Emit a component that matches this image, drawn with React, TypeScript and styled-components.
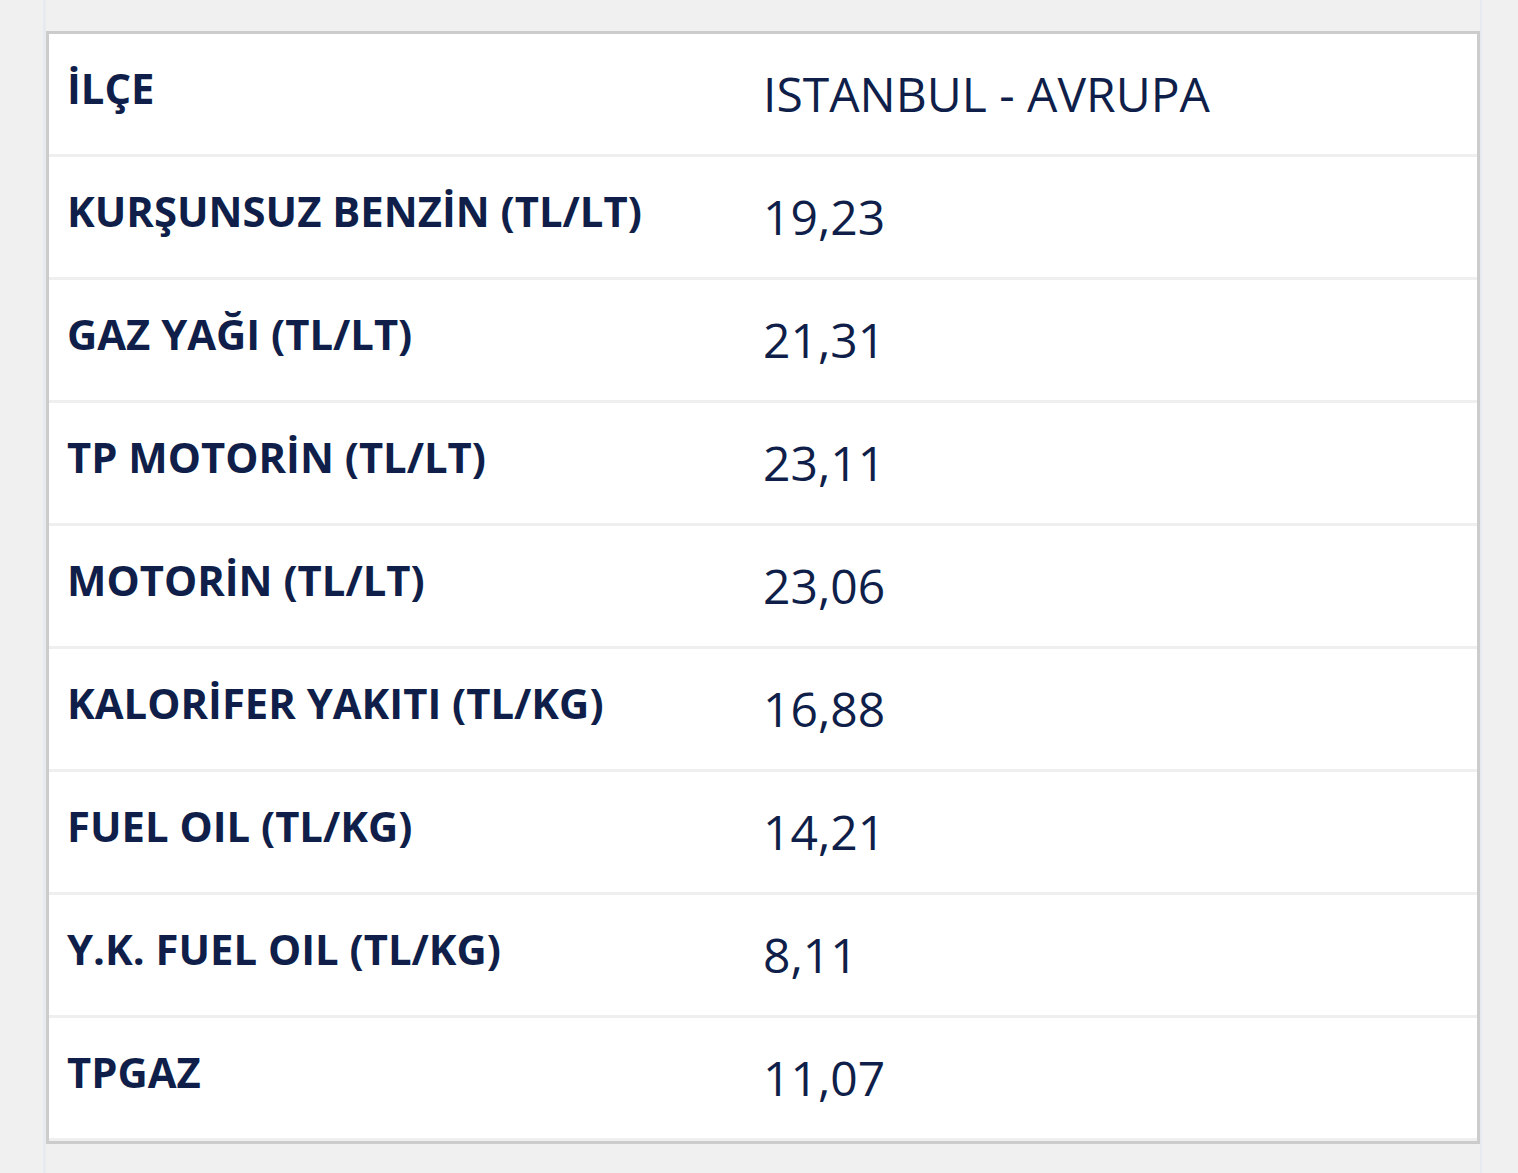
import styled, { createGlobalStyle } from 'styled-components'

const GlobalStyle = createGlobalStyle`
  html, body {
    margin: 0;
    padding: 0;
    background: #f0f0f0;
  }
`

const Page = styled.main`
  box-sizing: border-box;
  margin-left: 43px;
  width: 1439px;
  min-height: 1173px;
  padding-top: 31px;
  border-left: 3px solid #e7eaee;
  border-right: 2px solid #e7eaee;
  background: #f0f0f0;
`

const PriceTable = styled.table`
  width: 100%;
  border: 3px solid #cccccc;
  border-collapse: separate;
  border-spacing: 0;
  background: #ffffff;
  font-family: 'Open Sans', 'Noto Sans', sans-serif;
  color: #0f1f4a;
`

const Row = styled.tr``

const Label = styled.th`
  box-sizing: border-box;
  width: 694px;
  height: 123px;
  padding: 25px 18px 0;
  vertical-align: top;
  text-align: left;
  font-size: 41.8px;
  font-weight: 700;
  line-height: normal;
  border-bottom: 3px solid #efefef;
`

const Value = styled.td`
  box-sizing: border-box;
  height: 123px;
  padding: 27px 20px 0;
  vertical-align: top;
  font-size: 48px;
  font-weight: 400;
  line-height: normal;
  border-bottom: 3px solid #efefef;
`

const prices: [string, string][] = [
  ['İLÇE', 'ISTANBUL - AVRUPA'],
  ['KURŞUNSUZ BENZİN (TL/LT)', '19,23'],
  ['GAZ YAĞI (TL/LT)', '21,31'],
  ['TP MOTORİN (TL/LT)', '23,11'],
  ['MOTORİN (TL/LT)', '23,06'],
  ['KALORİFER YAKITI (TL/KG)', '16,88'],
  ['FUEL OIL (TL/KG)', '14,21'],
  ['Y.K. FUEL OIL (TL/KG)', '8,11'],
  ['TPGAZ', '11,07'],
]

const App: React.FC = () => (
  <>
    <GlobalStyle />
    <Page>
      <PriceTable>
        <tbody>
          {prices.map(([label, value]) => (
            <Row key={label}>
              <Label scope="row">{label}</Label>
              <Value>{value}</Value>
            </Row>
          ))}
        </tbody>
      </PriceTable>
    </Page>
  </>
)

export default App
